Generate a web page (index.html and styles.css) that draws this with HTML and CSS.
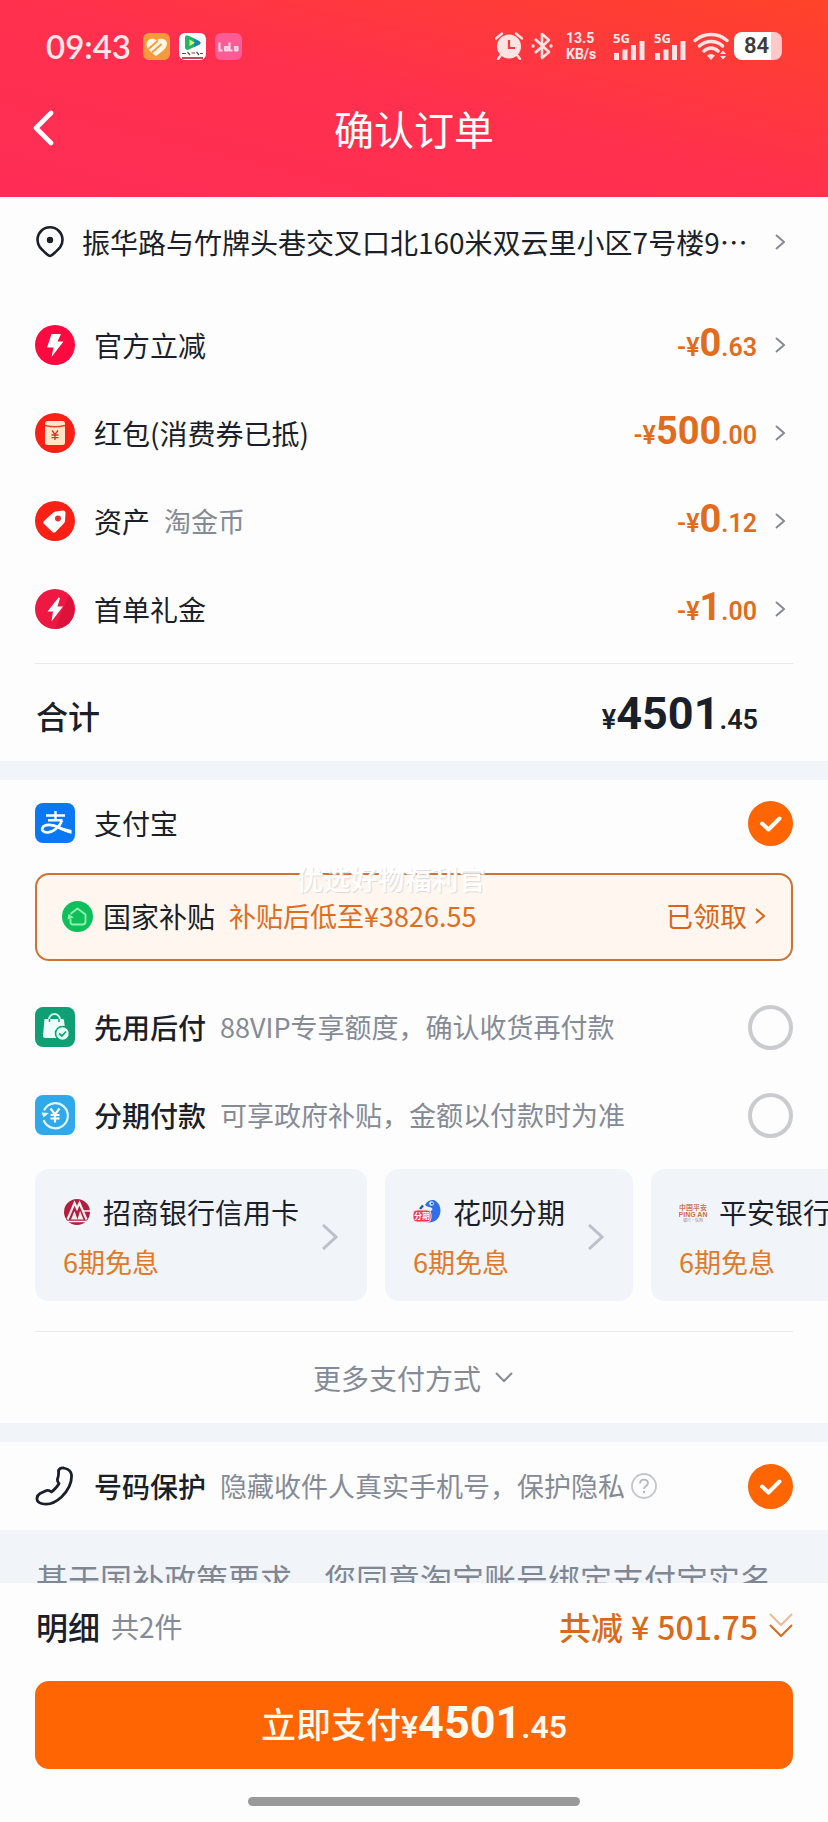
FILE: index.html
```
<!DOCTYPE html>
<html lang="zh-CN">
<head>
<meta charset="utf-8">
<meta name="viewport" content="width=device-width, initial-scale=1">
<title>确认订单</title>
<link rel="stylesheet" href="styles.css">
</head>
<body>
<div class="app">
  <header class="header">
    <div class="status">
      <span class="status-time">09:43</span>
      <svg class="status-app" viewBox="0 0 27 27" aria-hidden="true">
        <rect width="27" height="27" rx="6" fill="#f79a3e"/>
        <path d="M13.5 7.5C11.300 4.300 3.500 5.200 3.500 11.500C3.500 16 9 20 13 23C18 19.500 24 15.500 24 10.500C24 5 16 4.500 13.500 7.500Z" fill="#fff6e6"/>
        <path d="M6 15.500L14.500 8M9.500 19L18 11.500" stroke="#f79a3e" stroke-width="1.800" stroke-linecap="round"/>
      </svg>
      <svg class="status-app" viewBox="0 0 27 27" aria-hidden="true">
        <rect width="27" height="27" rx="6" fill="#fff"/>
        <path d="M6 4.500C6 2.500 8 2 10 3L20 8C22 9.200 22 10.500 20 11.800L10 16.500C8 17.500 6 16.500 6 14.500Z" fill="#27b46a"/>
        <path d="M10 3L20 8C22 9.200 22 10.500 20 11.800L15 14V6Z" fill="#1687b5"/>
        <path d="M10.500 6.500L16 9.800L10.500 13Z" fill="#d9f56b"/>
        <path d="M3 20.500H7M8.500 19L11 22M12.500 20H16M17.500 19L20 22M21 20.500H24" stroke="#6b4a42" stroke-width="1.200"/>
        <path d="M3 25H24" stroke="#a6242c" stroke-width="1.600"/>
      </svg>
      <svg class="status-app" viewBox="0 0 27 27" aria-hidden="true">
        <rect width="27" height="27" rx="6" fill="#fb5c96"/>
        <path d="M4.500 9.500V17.500H7.500M10 13V17.500H12.500V14H10M14.500 9.500V17.500H17.500M20 13V17.500H22.500V14H20" fill="none" stroke="#ffd3e4" stroke-width="2.200" stroke-linejoin="round"/>
      </svg>
      <span class="status-space"></span>
      <svg class="status-alarm" viewBox="0 0 28 28" aria-hidden="true">
        <path d="M1 6.500L7 1.500M21 1.500L27 6.500M6 23L3 27M22 23L25 27" stroke="#ffe3e3" stroke-width="2.400" stroke-linecap="round"/>
        <circle cx="14" cy="14.500" r="12" fill="#ffe3e3"/>
        <path d="M14 8V16H20" fill="none" stroke="#fb3a40" stroke-width="2.200"/>
      </svg>
      <svg class="status-bt" viewBox="0 0 22 28" aria-hidden="true">
        <path d="M4 7L18 20L11 26V2L18 8L4 21" fill="none" stroke="#ffe3e3" stroke-width="2.600" stroke-linejoin="round"/>
        <circle cx="2" cy="14" r="1.700" fill="#ffe3e3"/><circle cx="20" cy="14" r="1.700" fill="#ffe3e3"/>
      </svg>
      <span class="status-rate"><span>13.5</span><span>KB/s</span></span>
      <span class="signal"><span>5G</span>
        <svg viewBox="0 0 32 20" aria-hidden="true"><path d="M3.500 13V20M12 9.500V20M20.500 5V20M29 1V20" stroke="#ffe3e3" stroke-width="5"/></svg>
      </span>
      <span class="signal signal-second"><span>5G</span>
        <svg viewBox="0 0 32 20" aria-hidden="true"><path d="M3.500 13V20M12 9.500V20M20.500 5V20M29 1V20" stroke="#ffe3e3" stroke-width="5"/></svg>
      </span>
      <svg class="status-wifi" viewBox="0 0 36 28" aria-hidden="true">
        <path d="M2 8.500C11 .5 25 .5 34 8.500M6.500 14C13 8 23 8 29.500 14M11 19C15 15 21 15 25 19" fill="none" stroke="#ffe3e3" stroke-width="3.400" stroke-linecap="round"/>
        <path d="M14 23.500C16.500 21.500 19.500 21.500 22 23.500L18 28ZM27 22L30 18.500L33 22ZM27 24H33L30 27.500Z" fill="#ffe3e3"/>
      </svg>
      <span class="battery"><span>84</span></span>
    </div>
    <div class="nav">
      <button class="back" type="button" aria-label="返回">
        <svg viewBox="0 0 24 36" aria-hidden="true"><path d="M21 3L6 18L21 33" fill="none" stroke="#fff" stroke-width="4.600" stroke-linecap="round" stroke-linejoin="round"/></svg>
      </button>
      <h1>确认订单</h1>
    </div>
  </header>

  <main class="content">
    <section class="panel">
      <a class="row address" href="#address">
        <svg class="pin" viewBox="0 0 28 32" aria-hidden="true">
          <path d="M14 30C12.800 30 12 29.200 9 26.500C5 23 1.500 20 1.500 13.800A12.500 12.500 0 0 1 26.500 13.800C26.500 20 23 23 19 26.500C16 29.200 15.200 30 14 30Z" fill="none" stroke="#1b1f29" stroke-width="2.600"/>
          <circle cx="14" cy="14" r="3.200" fill="#1b1f29"/>
        </svg>
        <span class="address-text">振华路与竹牌头巷交叉口北160米双云里小区7号楼9…</span>
        <svg class="chev" viewBox="0 0 10 16" aria-hidden="true"><path d="M1 1L9 8L1 15"/></svg>
      </a>
      <a class="row" href="#instant">
        <svg class="icon" viewBox="0 0 40 40" aria-hidden="true"><circle cx="20" cy="20" r="20" fill="#fc0a40"/><path d="M16.500 9H26L22.500 16.500H28.500L16.500 32L18.500 22.500H12Z" fill="#fff"/></svg>
        <span class="label">官方立减</span>
        <span class="amount">-¥<b>0</b>.63</span>
        <svg class="chev" viewBox="0 0 10 16" aria-hidden="true"><path d="M1 1L9 8L1 15"/></svg>
      </a>
      <a class="row" href="#coupon">
        <svg class="icon" viewBox="0 0 40 40" aria-hidden="true"><circle cx="20" cy="20" r="20" fill="#fa2016"/><rect x="10" y="8" width="20" height="24" rx="2.500" fill="#ffe6c4"/><path d="M10 12.500Q20 15 30 12.500" fill="none" stroke="#e2442e" stroke-width="1.300"/><path d="M17 17.500L20 21.500L23 17.500M20 21.500V27M16.500 22H23.500M16.500 24.700H23.500" fill="none" stroke="#c63b2c" stroke-width="1.300"/></svg>
        <span class="label">红包(消费券已抵)</span>
        <span class="amount">-¥<b>500</b>.00</span>
        <svg class="chev" viewBox="0 0 10 16" aria-hidden="true"><path d="M1 1L9 8L1 15"/></svg>
      </a>
      <a class="row" href="#coins">
        <svg class="icon" viewBox="0 0 40 40" aria-hidden="true"><circle cx="20" cy="20" r="20" fill="#fa2016"/><path d="M20.500 10.500L28 9.500Q30.500 9.500 30.500 12L30 20Q29.800 21.500 28.500 22.700L20.500 31Q19 32.500 17.500 31L8.800 22.800Q7.500 21.300 9 20L18 11.800Q19 10.800 20.500 10.500Z" fill="#fff"/><circle cx="23" cy="17.500" r="3" fill="#d8382f"/></svg>
        <span class="label">资产</span><span class="note">淘金币</span>
        <span class="amount">-¥<b>0</b>.12</span>
        <svg class="chev" viewBox="0 0 10 16" aria-hidden="true"><path d="M1 1L9 8L1 15"/></svg>
      </a>
      <a class="row" href="#first">
        <svg class="icon" viewBox="0 0 40 40" aria-hidden="true"><circle cx="20" cy="20" r="20" fill="#ee1842"/><path d="M20 40A20 20 0 0 0 34 6Z" fill="#d20f37" opacity=".6"/><path d="M23.500 8.500L12.500 22.500H18L16.500 32.500L28 17.500H22.500L25 9Z" fill="#fff"/></svg>
        <span class="label">首单礼金</span>
        <span class="amount">-¥<b>1</b>.00</span>
        <svg class="chev" viewBox="0 0 10 16" aria-hidden="true"><path d="M1 1L9 8L1 15"/></svg>
      </a>
      <div class="total">
        <span>合计</span>
        <span class="total-amount">¥<b>4501</b>.45</span>
      </div>
    </section>

    <section class="panel">
      <label class="row pay first-pay">
        <svg class="icon" viewBox="0 0 40 40" aria-hidden="true"><rect width="40" height="40" rx="8" fill="#0a78f4"/><path d="M11 12.500H30M20.500 8V17M13 17.200H27.500" fill="none" stroke="#fff" stroke-width="2.400"/><path d="M27 17.500C25 23.500 18 29.700 12 29.500C8 29.300 6.500 27 7.500 24.800C9.500 20.500 18 21.500 24 24.500C29 27 33 28.500 36 29" fill="none" stroke="#fff" stroke-width="2.600"/><path d="M23 23.500L36.500 27V30.800Q31 29.500 23 25.500Z" fill="#fff"/></svg>
        <span class="label">支付宝</span>
        <span class="tick"><input type="radio" name="pay" checked><svg viewBox="0 0 45 45" aria-hidden="true"><path d="M14 22.500L20.500 28.500L31.500 17.500"/></svg></span>
      </label>
      <div class="subsidy-wrap">
        <a class="subsidy" href="#subsidy">
          <svg class="subsidy-icon" viewBox="0 0 31 31" aria-hidden="true"><circle cx="15.500" cy="15.500" r="15.500" fill="#0fbf5b"/><path d="M8.500 18V21Q8.500 23.500 11 23.500H20.500Q23.500 23.500 23.500 20.500V13.500L15.500 7.500L8.500 13" fill="none" stroke="#8cf5ac" stroke-width="1.900" stroke-linejoin="round"/><path d="M5.500 18.500L6.500 13L12 16.500Z" fill="#8cf5ac"/></svg>
          <span class="subsidy-name">国家补贴</span>
          <span class="subsidy-price">补贴后低至¥3826.55</span>
          <span class="subsidy-state">已领取</span>
          <svg class="chev chev-orange" viewBox="0 0 10 16" aria-hidden="true"><path d="M1 1L9 8L1 15"/></svg>
        </a>
        <span class="watermark">优选好物福利官</span>
      </div>
      <label class="row pay">
        <svg class="icon" viewBox="0 0 40 40" aria-hidden="true"><rect width="40" height="40" rx="8" fill="#0f9f74"/><path d="M14 14V12.500A5.500 5.500 0 0 1 25 12.500V14" fill="none" stroke="#c9f6e4" stroke-width="2"/><path d="M9.500 12H28Q29 12 29 13.500L31 29.500Q31 31 29.500 31H10Q8 31 8 29Z" fill="#ecfff8"/><path d="M14.500 12V15M24 12V15" stroke="#0f9f74" stroke-width="1.500"/><circle cx="27.500" cy="26.500" r="7" fill="#e4fff5" stroke="#0f9f74" stroke-width="1.600"/><path d="M24 26.500L26.800 29L31 24.500" fill="none" stroke="#0f9f74" stroke-width="1.700"/></svg>
        <span class="label strong">先用后付</span><span class="note">88VIP专享额度，确认收货再付款</span>
        <span class="tick"><input type="radio" name="pay"></span>
      </label>
      <label class="row pay">
        <svg class="icon" viewBox="0 0 40 40" aria-hidden="true"><rect width="40" height="40" rx="8" fill="#2fa9ea"/><path d="M9.500 14.500A12.500 12.500 0 1 1 9 26" fill="none" stroke="#e2f6ff" stroke-width="2.200" stroke-linecap="round"/><path d="M6.500 17.500L8.500 22.500L14 18Z" fill="#e2f6ff"/><path d="M15.500 13.500L20 19.500L24.500 13.500M20 19.500V27.500M15.500 20H24.500M15.500 23.500H24.500" fill="none" stroke="#fff" stroke-width="2.200"/></svg>
        <span class="label strong">分期付款</span><span class="note">可享政府补贴，金额以付款时为准</span>
        <span class="tick"><input type="radio" name="pay"></span>
      </label>
      <div class="plans">
        <button class="plan" type="button">
          <span class="plan-body">
            <span class="plan-name">
              <svg class="plan-icon" viewBox="0 0 28 28" aria-hidden="true"><circle cx="14" cy="14" r="13" fill="#b0203e"/><path d="M4.500 21.500L11.500 5L14 10.500L16.500 5L23.500 21.500" fill="none" stroke="#f7eef3" stroke-width="2.200"/><path d="M8 21.500L11.500 13L14.500 21.500L17 13L20.500 21.500Z" fill="#f7eef3"/><path d="M3 23.500H25" stroke="#f7eef3" stroke-width="1.500"/><path d="M20 13H27" stroke="#f7eef3" stroke-width="1.500"/></svg>
              招商银行信用卡</span>
            <span class="plan-rate">6期免息</span>
          </span>
          <svg class="plan-chev" viewBox="0 0 16 26" aria-hidden="true"><path d="M1 1L14 13L1 25"/></svg>
        </button>
        <button class="plan" type="button">
          <span class="plan-body">
            <span class="plan-name">
              <svg class="plan-icon" viewBox="0 0 28 28" aria-hidden="true"><path d="M12 7C15 2 19 1.500 22 2.500C28 6 29 14 25.500 19.500C22 25 14 26 9 22L14 13C19 14 21 11 18 9.500C15.500 9 14 8.500 12 7Z" fill="#2f6fea"/><circle cx="18.500" cy="5.500" r="2.300" fill="#d7f2ff"/><circle cx="19" cy="5.500" r="1" fill="#173a8c"/><path d="M7 11L10 7.500" stroke="#2a4fb8" stroke-width="2.400"/><rect x="0" y="12" width="18" height="12" rx="4" fill="#ef3a4f" stroke="#ffd8dd" stroke-width="1"/><text x="9" y="21" text-anchor="middle" class="badge-text">分期</text></svg>
              花呗分期</span>
            <span class="plan-rate">6期免息</span>
          </span>
          <svg class="plan-chev" viewBox="0 0 16 26" aria-hidden="true"><path d="M1 1L14 13L1 25"/></svg>
        </button>
        <button class="plan" type="button">
          <span class="plan-body">
            <span class="plan-name">
              <svg class="plan-icon" viewBox="0 0 28 28" aria-hidden="true"><text x="14" y="12" text-anchor="middle" class="bank-cn">中国平安</text><text x="14" y="19" text-anchor="middle" class="bank-en">PING AN</text><text x="14" y="24" text-anchor="middle" class="bank-sub">银行·信用</text></svg>
              平安银行信用卡</span>
            <span class="plan-rate">6期免息</span>
          </span>
          <svg class="plan-chev" viewBox="0 0 16 26" aria-hidden="true"><path d="M1 1L14 13L1 25"/></svg>
        </button>
      </div>
      <button class="more" type="button">更多支付方式
        <svg viewBox="0 0 18 11" aria-hidden="true"><path d="M1 1L9 9L17 1"/></svg>
      </button>
    </section>

    <section class="panel">
      <label class="row pay">
        <svg class="icon" viewBox="0 0 40 40" aria-hidden="true"><path d="M23.500 4.500Q25 1.500 28.500 2Q36 3.500 36.500 9C37 17 32.500 25 26.500 31C20.500 36.500 13 39.500 6.500 37.500Q1.500 36 2 32Q2.500 29 5 27.500L11.500 24.500Q14 23.800 16.500 26C20 23 22.500 20.500 24 17.500Q22 15.500 22.500 13Q24 9 23.500 4.500Z" fill="none" stroke="#1b1f29" stroke-width="2.800" stroke-linejoin="round"/></svg>
        <span class="label strong">号码保护</span><span class="note">隐藏收件人真实手机号，保护隐私</span>
        <svg class="help" viewBox="0 0 26 26" aria-hidden="true"><circle cx="13" cy="13" r="12" fill="none" stroke="#c3c6ca" stroke-width="1.800"/><path d="M9 10.500C9 5.500 17 5.500 17 10C17 13 13 13 13 16" fill="none" stroke="#b4b8bd" stroke-width="1.800"/><circle cx="13" cy="19" r="1.200" fill="#b4b8bd"/></svg>
        <span class="tick"><input type="checkbox" checked><svg viewBox="0 0 45 45" aria-hidden="true"><path d="M14 22.500L20.500 28.500L31.500 17.500"/></svg></span>
      </label>
    </section>
    <p class="terms">基于国补政策要求，您同意淘宝账号绑定支付宝实名</p>
  </main>

  <footer class="footer">
    <div class="summary">
      <span class="summary-title">明细</span><span class="summary-count">共2件</span>
      <button class="summary-off" type="button"><span>共减</span><span>¥</span><span>501.75</span>
        <svg viewBox="0 0 24 26" aria-hidden="true"><path d="M1 1L12 12L23 1" opacity=".45"/><path d="M1 12L12 23L23 12"/></svg>
      </button>
    </div>
    <button class="submit" type="button"><span>立即支付</span><span class="submit-amount">¥<b>4501</b>.45</span></button>
    <div class="home"></div>
  </footer>
</div>
</body>
</html>
```
FILE: styles.css
```
* { box-sizing: border-box; }
body {
  margin: 0;
  background: #fdfdfe;
  color: #1b1f29;
  font: 400 28px/40px "Noto Sans CJK SC", sans-serif;
}
h1, p { margin: 0; }
a { color: inherit; text-decoration: none; }
button { border: 0; padding: 0; background: none; color: inherit; font: inherit; }
svg { flex: none; }

.app { display: flex; flex-direction: column; height: 100vh; overflow: hidden; }

.header {
  flex: none;
  padding-bottom: 33px;
  color: #fff;
  background: linear-gradient(to top right, #ff2d56, #ff304d 50%, #ff4329);
}
.status { display: flex; align-items: center; height: 92px; padding: 0 46px; color: #ffe8e8; }
.status-time { width: 88px; margin-right: 9px; font: 600 33px/40px Lato, sans-serif; }
.status-app { width: 27px; height: 27px; margin-right: 9px; }
.status-space { flex: 1; }
.status-alarm { width: 28px; height: 28px; margin-right: 8px; }
.status-bt { width: 22px; height: 28px; margin-right: 13px; }
.status-rate { display: flex; flex-direction: column; gap: 1px; width: 34px; margin-right: 13px; font: 700 14px/15px Roboto, sans-serif; }
.signal { display: grid; width: 32px; height: 28px; margin-right: 9px; }
.signal > * { grid-area: 1 / 1; }
.signal span { font: 700 13px/12px "Noto Sans", sans-serif; }
.signal svg { width: 32px; height: 20px; align-self: end; }
.signal-second { margin-right: 7px; }
.status-wifi { width: 36px; height: 28px; margin-right: 5px; }
.battery {
  display: flex;
  width: 48px;
  height: 28px;
  padding-left: 10px;
  border-radius: 8px;
  background: linear-gradient(to right, #fff 37px, #ffc9c9 37px);
  color: #3d3a3d;
  font: 600 22px/28px Roboto, sans-serif;
}
.nav { display: grid; grid-template-columns: 60px 1fr 60px; align-items: center; height: 72px; }
.nav h1 { font-size: 40px; line-height: 56px; font-weight: 400; text-align: center; }
.back { display: flex; padding-left: 30px; }
.back svg { width: 24px; height: 36px; }

.content { flex: 1; min-height: 0; overflow-y: auto; scrollbar-width: none; background: #f1f4f9; }
.panel { margin-bottom: 19px; background: #fdfdfe; }

.row { display: flex; align-items: center; height: 88px; padding: 0 43px 0 35px; }
.icon { width: 40px; height: 40px; margin-right: 19px; }
.label { white-space: nowrap; }
.strong { font-weight: 500; }
.note { margin-left: 14px; color: #858b96; font-size: 27px; white-space: nowrap; }
.chev { width: 10px; height: 16px; margin-left: 18px; fill: none; stroke: #858b96; stroke-width: 2; }
.address { height: 90px; margin-bottom: 14px; padding-left: 36px; }
.pin { width: 28px; height: 32px; margin-right: 18px; }
.address-text { flex: 1; min-width: 0; overflow: hidden; white-space: nowrap; }

.amount, .total-amount, .submit-amount { font-family: Roboto, sans-serif; font-weight: 600; white-space: nowrap; }
.amount b, .total-amount b, .submit-amount b { font-weight: 700; }
.amount { margin-left: auto; color: #e06c1e; font-size: 25px; }
.amount b { font-size: 38px; }
.total {
  display: flex;
  align-items: baseline;
  justify-content: space-between;
  height: 98px;
  margin: 10px 35px 0;
  padding: 22px 35px 0 1px;
  border-top: 1px solid #e6e8ec;
  font-size: 32px;
  font-weight: 500;
  line-height: 56px;
}
.total-amount { font-size: 27px; }
.total-amount b { font-size: 45px; }

.pay { padding-right: 35px; }
.first-pay { height: 86px; }
.tick { display: grid; margin-left: auto; }
.tick > * { grid-area: 1 / 1; width: 45px; height: 45px; margin: 0; }
.tick input { appearance: none; border: 4px solid #c9cbcf; border-radius: 50%; }
.tick input:checked { border-color: #ff6502; background: #ff6502; }
.tick svg { z-index: 1; fill: none; stroke: #fff; stroke-width: 4; stroke-linecap: round; stroke-linejoin: round; pointer-events: none; }

.subsidy-wrap { position: relative; margin: 7px 35px 22px; }
.subsidy {
  display: flex;
  align-items: center;
  height: 88px;
  padding: 0 26px 2px 25px;
  border: 2px solid #cf7232;
  border-radius: 14px;
  background: #fff6f0;
}
.subsidy-icon { width: 31px; height: 31px; margin-right: 10px; }
.subsidy-price { margin-left: 14px; color: #e06c1e; font-size: 27px; }
.subsidy-state { margin-left: auto; color: #d96416; font-size: 27px; }
.chev-orange { margin-left: 8px; stroke: #d96416; }
.watermark {
  position: absolute;
  top: -14px;
  left: 50%;
  transform: translateX(-50%);
  margin-left: -23px;
  color: #fff;
  font-size: 27px;
  font-weight: 500;
  text-shadow: 1px 1px 1px #dcd9d9;
  white-space: nowrap;
  pointer-events: none;
}

.plans { display: flex; gap: 18px; margin: 10px 0 30px; padding-left: 35px; overflow: hidden; }
.plan {
  display: flex;
  flex: none;
  align-items: center;
  gap: 23px;
  height: 132px;
  padding: 4px 29px 0 28px;
  border-radius: 14px;
  background: #f1f4f9;
  text-align: left;
}
.plan-body { display: grid; gap: 10px; }
.plan-name { display: flex; align-items: center; gap: 12px; white-space: nowrap; }
.plan-icon { width: 28px; height: 28px; }
.plan-rate { color: #e07a28; font-size: 27px; }
.plan-chev { width: 16px; height: 26px; fill: none; stroke: #bcc0c9; stroke-width: 3; }
.badge-text { fill: #fff; font: 700 8px "Noto Sans CJK SC", sans-serif; }
.bank-cn { fill: #c97a5c; font: 700 7px "Noto Sans CJK SC", sans-serif; }
.bank-en { fill: #e0683c; font: 700 7px "Liberation Sans", sans-serif; }
.bank-sub { fill: #a08a80; font: 400 4px "Noto Sans CJK SC", sans-serif; }

.more {
  display: flex;
  align-items: center;
  justify-content: center;
  gap: 14px;
  width: calc(100% - 70px);
  height: 92px;
  margin: 0 35px;
  padding-right: 2px;
  border-top: 1px solid #e6e8ec;
  color: #858b96;
}
.more svg { width: 18px; height: 11px; fill: none; stroke: #858b96; stroke-width: 2; }
.help { width: 26px; height: 26px; margin-left: 6px; }
.panel:last-of-type { margin-bottom: 0; }
.terms { padding: 28px 36px; color: #7f8793; font-size: 32px; line-height: 40px; white-space: nowrap; }

.footer { flex: none; padding: 0 35px 16px; background: #fdfdfe; }
.summary { display: flex; align-items: center; height: 86px; padding-left: 1px; margin-bottom: 12px; }
.summary-title { font-size: 32px; font-weight: 500; }
.summary-count { margin-left: 11px; color: #858b96; font-size: 28px; }
.summary-off { display: flex; align-items: center; gap: 8px; margin-left: auto; color: #d96a1c; font-size: 32px; font-weight: 500; }
.summary-off svg { width: 24px; height: 26px; margin-left: 3px; fill: none; stroke: #d96a1c; stroke-width: 2; }
.submit {
  display: flex;
  align-items: baseline;
  justify-content: center;
  width: 100%;
  height: 88px;
  border-radius: 14px;
  background: #ff6502;
  color: #fffaf0;
  font-size: 35px;
  font-weight: 500;
  line-height: 84px;
}
.submit-amount { font-size: 32px; }
.submit-amount b { font-size: 45px; }
.home { width: 40%; min-width: 332px; height: 9px; margin: 28px auto 0; border-radius: 5px; background: #999; }
```
